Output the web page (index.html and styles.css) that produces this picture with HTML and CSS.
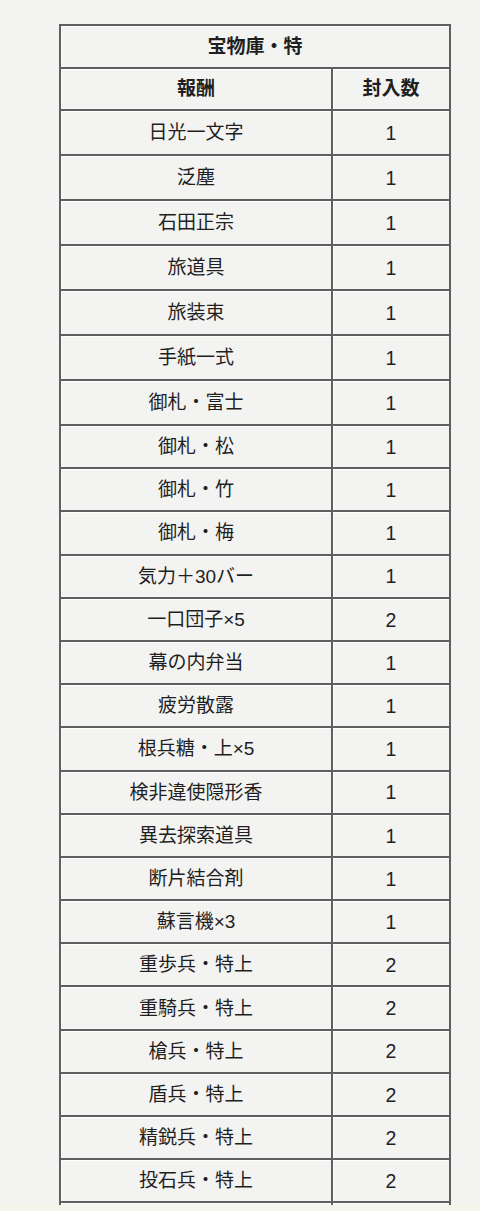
FILE: index.html
```html
<!DOCTYPE html>
<html lang="ja">
<head>
<meta charset="utf-8">
<title>宝物庫・特</title>
<link rel="stylesheet" href="styles.css">
</head>
<body>
<table class="reward-table">
  <colgroup>
    <col class="col-name">
    <col class="col-count">
  </colgroup>
  <thead>
    <tr><th colspan="2" class="title">宝物庫・特</th></tr>
    <tr><th>報酬</th><th>封入数</th></tr>
  </thead>
  <tbody>
    <tr class="tall"><td>日光一文字</td><td class="num">1</td></tr>
    <tr class="tall"><td>泛塵</td><td class="num">1</td></tr>
    <tr class="tall"><td>石田正宗</td><td class="num">1</td></tr>
    <tr class="tall"><td>旅道具</td><td class="num">1</td></tr>
    <tr class="tall"><td>旅装束</td><td class="num">1</td></tr>
    <tr class="tall"><td>手紙一式</td><td class="num">1</td></tr>
    <tr class="tall"><td>御札・富士</td><td class="num">1</td></tr>
    <tr><td>御札・松</td><td class="num">1</td></tr>
    <tr><td>御札・竹</td><td class="num">1</td></tr>
    <tr><td>御札・梅</td><td class="num">1</td></tr>
    <tr><td>気力＋30バー</td><td class="num">1</td></tr>
    <tr><td>一口団子×5</td><td class="num">2</td></tr>
    <tr><td>幕の内弁当</td><td class="num">1</td></tr>
    <tr><td>疲労散露</td><td class="num">1</td></tr>
    <tr><td>根兵糖・上×5</td><td class="num">1</td></tr>
    <tr><td>検非違使隠形香</td><td class="num">1</td></tr>
    <tr><td>異去探索道具</td><td class="num">1</td></tr>
    <tr><td>断片結合剤</td><td class="num">1</td></tr>
    <tr><td>蘇言機×3</td><td class="num">1</td></tr>
    <tr><td>重歩兵・特上</td><td class="num">2</td></tr>
    <tr><td>重騎兵・特上</td><td class="num">2</td></tr>
    <tr><td>槍兵・特上</td><td class="num">2</td></tr>
    <tr><td>盾兵・特上</td><td class="num">2</td></tr>
    <tr><td>精鋭兵・特上</td><td class="num">2</td></tr>
    <tr><td>投石兵・特上</td><td class="num">2</td></tr>
    <tr><td></td><td class="num"></td></tr>
  </tbody>
</table>
<div class="bottom-bar"></div>
</body>
</html>
```
FILE: styles.css
```css
html, body {
  margin: 0;
  padding: 0;
  background: #f3f3f1;
}
body {
  font-family: "Liberation Sans", "Noto Sans CJK JP", sans-serif;
  color: #1f1f1f;
  padding: 24px 0 0 59px;
}
.reward-table {
  border-collapse: collapse;
  width: 390px;
  table-layout: fixed;
  font-size: 19px;
  line-height: 1;
}
.col-name { width: 272px; }
.col-count { width: 118px; }
.reward-table th,
.reward-table td {
  border: 2px solid #5f5f5f;
  text-align: center;
  vertical-align: middle;
  padding: 0;
  box-sizing: border-box;
  box-shadow: inset 1px 1px 0 #ffffff;
}
.reward-table th {
  font-weight: bold;
  height: 42.5px;
}
.reward-table td { height: 43.2px; }
.reward-table tr.tall td { height: 45px; }
.reward-table td.num {
  padding-top: 2px;
  font-size: 19.5px;
}
.bottom-bar {
  position: fixed;
  left: 0;
  right: 0;
  bottom: 0;
  height: 6px;
  background: #f7f4e9;
}
```
